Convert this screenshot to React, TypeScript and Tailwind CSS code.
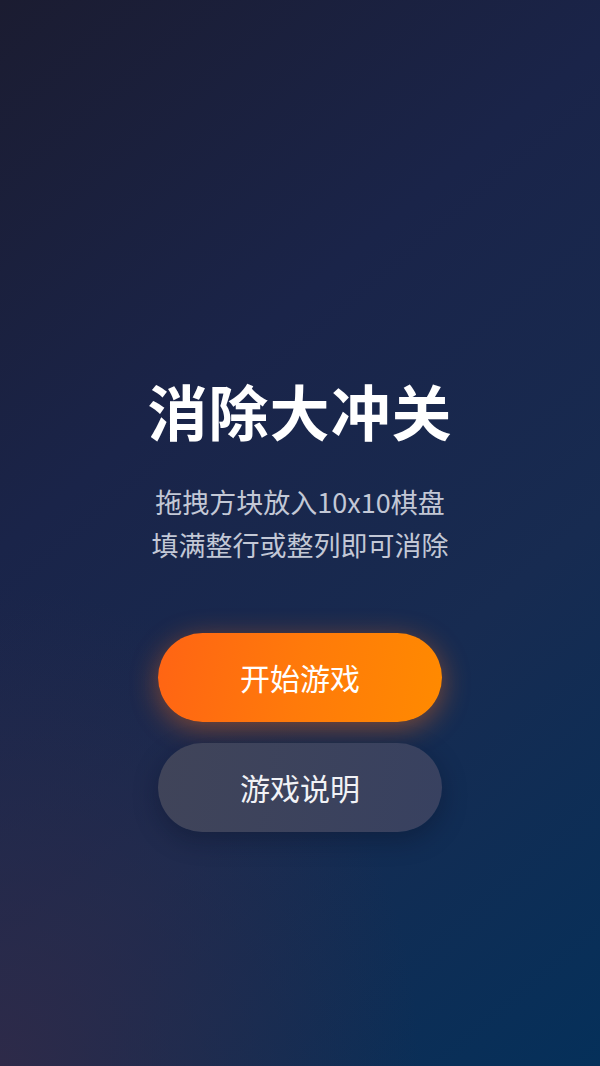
export default function App() {
  return (
    <div
      className="relative w-full h-[1066px] overflow-hidden bg-[linear-gradient(140deg,#1b1c31_0%,#1a2449_35%,#172b51_65%,#05305a_100%)]"
      style={{ fontFamily: '"Noto Sans CJK SC", "Noto Sans", sans-serif' }}
    >
      {/* warm purple tint in the bottom-left corner */}
      <div className="absolute inset-0 bg-[radial-gradient(ellipse_70%_45%_at_0%_100%,rgba(48,42,72,0.9)_0%,rgba(48,42,72,0)_100%)] pointer-events-none"></div>

      <div className="relative flex flex-col items-center pt-[374px]">
        <h1 className="text-[60px] leading-[72px] font-bold text-white tracking-[1px]">
          消除大冲关
        </h1>
        <div className="mt-[34px] text-[27px] leading-[43px] text-[#c3c8d6] text-center">
          <p>拖拽方块放入10x10棋盘</p>
          <p>填满整行或整列即可消除</p>
        </div>

        <div className="mt-[67px] flex flex-col gap-[21px]">
          <button className="w-[284px] h-[89px] rounded-full bg-[linear-gradient(100deg,#ff6414_0%,#ff7a0a_50%,#ff8a00_100%)] text-white text-[30px] shadow-[0_6px_28px_rgba(255,110,20,0.45)]">
            开始游戏
          </button>
          <button className="w-[284px] h-[89px] rounded-full bg-[linear-gradient(100deg,#404459_0%,#384160_100%)] text-[#f1f2f6] text-[30px] shadow-[0_8px_24px_rgba(10,15,35,0.35)]">
            游戏说明
          </button>
        </div>
      </div>
    </div>
  )
}
